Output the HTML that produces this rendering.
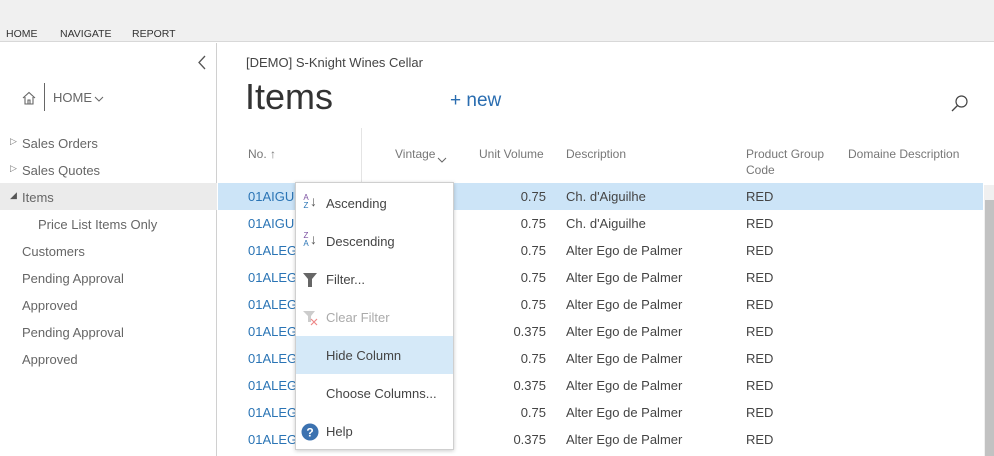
<!DOCTYPE html>
<html><head><meta charset="utf-8"><style>
*{margin:0;padding:0;box-sizing:border-box}
body{width:994px;height:456px;overflow:hidden;background:#fff;font-family:"Liberation Sans",sans-serif;font-size:13px;color:#444;position:relative}
.a{position:absolute;white-space:nowrap}
.top{left:0;top:0;width:994px;height:42px;background:#f0f0f0;border-bottom:1px solid #d8d8d8}
.tab{font-size:10.5px;color:#333;top:28px}
.side{left:0;top:43px;width:217px;height:413px;border-right:1px solid #d0d0d0}
.nav{font-size:13px;color:#666}
.hdr{font-size:12px;color:#777}
.row{left:218px;width:766px;height:27px}
.no{color:#2a74b5;left:248px}
.num{text-align:right;width:60px;left:486px}
.desc{left:566px}
.grp{left:746px}
.menu{left:295px;top:182px;width:159px;height:268px;background:#fff;border:1px solid #cfcfcf;box-shadow:0 1px 4px rgba(0,0,0,.2)}
.mi{left:326px;font-size:13px;color:#444}
</style></head><body>
<div class="a top"></div>
<div class="a tab" style="left:6px">HOME</div>
<div class="a tab" style="left:60px">NAVIGATE</div>
<div class="a tab" style="left:132px">REPORT</div>
<div class="a side"></div>
<svg class="a" style="left:196px;top:55px" width="12" height="16"><path d="M9 1 L3 7.5 L9 14" stroke="#555" stroke-width="1.3" fill="none"/></svg>
<svg class="a" style="left:21px;top:90px" width="16" height="16"><path d="M2 8 L8 2.5 L14 8 M4 7 V14 H12 V7 M7 14 V10 H9 V14" stroke="#666" stroke-width="1.1" fill="none"/></svg>
<div class="a" style="left:44px;top:83px;width:1px;height:28px;background:#666"></div>
<div class="a nav" style="left:53px;top:90px">HOME</div>
<svg class="a" style="left:94px;top:95px" width="10" height="8"><path d="M1 2 L5 6 L9 2" stroke="#666" fill="none"/></svg>
<div class="a nav" style="left:10px;top:136px;font-size:9px;color:#777">▷</div>
<div class="a nav" style="left:22px;top:136px">Sales Orders</div>
<div class="a nav" style="left:10px;top:163px;font-size:9px;color:#777">▷</div>
<div class="a nav" style="left:22px;top:163px">Sales Quotes</div>
<div class="a" style="left:0;top:183px;width:217px;height:27px;background:#ebebeb"></div>
<div class="a nav" style="left:10px;top:190px;font-size:9px;color:#555">◢</div>
<div class="a nav" style="left:22px;top:190px">Items</div>
<div class="a nav" style="left:38px;top:217px">Price List Items Only</div>
<div class="a nav" style="left:22px;top:244px">Customers</div>
<div class="a nav" style="left:22px;top:271px">Pending Approval</div>
<div class="a nav" style="left:22px;top:298px">Approved</div>
<div class="a nav" style="left:22px;top:325px">Pending Approval</div>
<div class="a nav" style="left:22px;top:352px">Approved</div>

<div class="a" style="left:246px;top:55px;font-size:13px;color:#444">[DEMO] S-Knight Wines Cellar</div>
<div class="a" style="left:245px;top:76px;font-size:36px;color:#333">Items</div>
<div class="a" style="left:450px;top:90px;font-size:19px;color:#2a6db0">+ new</div>
<svg class="a" style="left:950px;top:94px" width="20" height="20"><circle cx="11.5" cy="7.5" r="5.5" stroke="#444" stroke-width="1.2" fill="none"/><path d="M7.5 11.5 L2 17" stroke="#444" stroke-width="1.3"/></svg>
<div class="a" style="left:361px;top:128px;width:1px;height:55px;background:#e4e4e4"></div>
<div class="a hdr" style="left:248px;top:147px">No. ↑</div>
<div class="a hdr" style="left:395px;top:147px">Vintage</div>
<svg class="a" style="left:437px;top:156px" width="10" height="8"><path d="M1 2 L5 6 L9 2" stroke="#666" fill="none"/></svg>
<div class="a hdr" style="left:479px;top:147px">Unit Volume</div>
<div class="a hdr" style="left:566px;top:147px">Description</div>
<div class="a hdr" style="left:746px;top:146px;line-height:16px">Product Group<br>Code</div>
<div class="a hdr" style="left:848px;top:147px">Domaine Description</div>

<div class="a row" style="top:183px;width:765px;background:#cce4f7"></div>
<div class="a" style="left:984px;top:185px;width:10px;height:271px;background:#f0f0f0"></div>
<div class="a" style="left:985px;top:200px;width:9px;height:256px;background:#c2c2c2"></div>

<div class="a no" style="top:189px">01AIGUI</div><div class="a num" style="top:189px">0.75</div><div class="a desc" style="top:189px">Ch. d'Aiguilhe</div><div class="a grp" style="top:189px">RED</div>
<div class="a no" style="top:216px">01AIGUI</div><div class="a num" style="top:216px">0.75</div><div class="a desc" style="top:216px">Ch. d'Aiguilhe</div><div class="a grp" style="top:216px">RED</div>
<div class="a no" style="top:243px">01ALEGI</div><div class="a num" style="top:243px">0.75</div><div class="a desc" style="top:243px">Alter Ego de Palmer</div><div class="a grp" style="top:243px">RED</div>
<div class="a no" style="top:270px">01ALEGI</div><div class="a num" style="top:270px">0.75</div><div class="a desc" style="top:270px">Alter Ego de Palmer</div><div class="a grp" style="top:270px">RED</div>
<div class="a no" style="top:297px">01ALEGI</div><div class="a num" style="top:297px">0.75</div><div class="a desc" style="top:297px">Alter Ego de Palmer</div><div class="a grp" style="top:297px">RED</div>
<div class="a no" style="top:324px">01ALEGI</div><div class="a num" style="top:324px">0.375</div><div class="a desc" style="top:324px">Alter Ego de Palmer</div><div class="a grp" style="top:324px">RED</div>
<div class="a no" style="top:351px">01ALEGI</div><div class="a num" style="top:351px">0.75</div><div class="a desc" style="top:351px">Alter Ego de Palmer</div><div class="a grp" style="top:351px">RED</div>
<div class="a no" style="top:378px">01ALEGI</div><div class="a num" style="top:378px">0.375</div><div class="a desc" style="top:378px">Alter Ego de Palmer</div><div class="a grp" style="top:378px">RED</div>
<div class="a no" style="top:405px">01ALEGI</div><div class="a num" style="top:405px">0.75</div><div class="a desc" style="top:405px">Alter Ego de Palmer</div><div class="a grp" style="top:405px">RED</div>
<div class="a no" style="top:432px">01ALEGI</div><div class="a num" style="top:432px">0.375</div><div class="a desc" style="top:432px">Alter Ego de Palmer</div><div class="a grp" style="top:432px">RED</div>

<div class="a menu"></div>
<div class="a" style="left:296px;top:336px;width:157px;height:38px;background:#d5e9f8"></div>
<div class="a" style="left:302px;top:194px;font-size:8px;line-height:8px;color:#7a4fa0;text-align:center;width:8px">A<br><span style="color:#2a74b5">Z</span></div>
<div class="a" style="left:310px;top:193px;font-size:14px;color:#555">↓</div>
<div class="a" style="left:302px;top:232px;font-size:8px;line-height:8px;color:#7a4fa0;text-align:center;width:8px">Z<br><span style="color:#2a74b5">A</span></div>
<div class="a" style="left:310px;top:231px;font-size:14px;color:#555">↓</div>
<svg class="a" style="left:302px;top:272px" width="16" height="16"><path d="M1 1 H15 L10 7 V15 H6 V7 Z" fill="#666"/></svg>
<svg class="a" style="left:302px;top:310px" width="16" height="16"><path d="M1 1 H13 L9 6 V12 H6 V6 Z" fill="#ccc"/><path d="M9 9 L15 15 M15 9 L9 15" stroke="#e88" stroke-width="1.2"/></svg>
<svg class="a" style="left:301px;top:423px" width="18" height="18"><circle cx="9" cy="9" r="8.5" fill="#3c72b0"/><text x="9" y="13.5" text-anchor="middle" font-family="Liberation Sans" font-weight="bold" font-size="12" fill="#fff">?</text></svg>
<div class="a mi" style="top:196px">Ascending</div>
<div class="a mi" style="top:234px">Descending</div>
<div class="a mi" style="top:272px">Filter...</div>
<div class="a mi" style="top:310px;color:#aaa">Clear Filter</div>
<div class="a mi" style="top:348px">Hide Column</div>
<div class="a mi" style="top:386px">Choose Columns...</div>
<div class="a mi" style="top:424px">Help</div>
</body></html>
